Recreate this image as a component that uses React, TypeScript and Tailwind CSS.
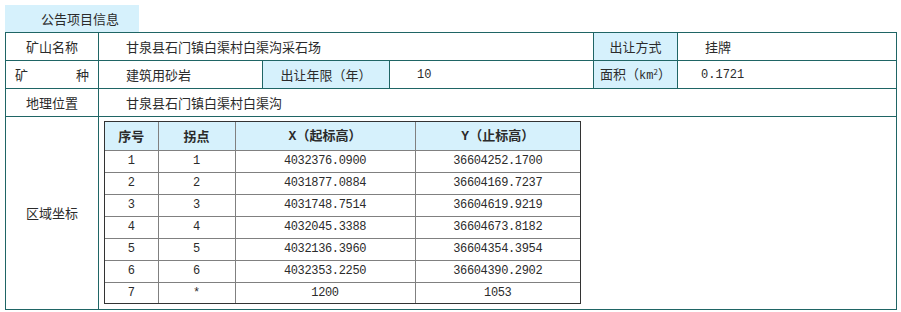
const points = [
  ['1', '1', '4032376.0900', '36604252.1700'],
  ['2', '2', '4031877.0884', '36604169.7237'],
  ['3', '3', '4031748.7514', '36604619.9219'],
  ['4', '4', '4032045.3388', '36604673.8182'],
  ['5', '5', '4032136.3960', '36604354.3954'],
  ['6', '6', '4032353.2250', '36604390.2902'],
  ['7', '*', '1200', '1053'],
];

const cjk = 'font-["Noto_Sans_CJK_SC",sans-serif]';
const mono = 'font-["Liberation_Mono","Noto_Sans_CJK_SC",monospace]';

export default function App() {
  return (
    <div className={`min-h-[312px] bg-white pl-[5px] pt-[5px] text-[13px] text-[#2b2b2b] ${cjk}`}>
      <div className="flex h-[27px] w-[134px] items-center bg-[#d6f1fc] pl-[36px] leading-none">公告项目信息</div>

      <table className="w-[891px] table-fixed border-collapse [&>tbody>tr>td]:border [&>tbody>tr>td]:border-[#1f6565]">
        <colgroup>
          <col className="w-[93px]" />
          <col className="w-[164px]" />
          <col className="w-[127px]" />
          <col className="w-[204px]" />
          <col className="w-[84px]" />
          <col className="w-[219px]" />
        </colgroup>
        <tbody>
          <tr className="h-[28px]">
            <td className="p-0 text-center">矿山名称</td>
            <td colSpan={3} className="p-0 pl-[27px]">甘泉县石门镇白渠村白渠沟采石场</td>
            <td className="bg-[#d6f1fc] p-0 text-center">出让方式</td>
            <td className="p-0 pl-[27px]">挂牌</td>
          </tr>
          <tr className="h-[28px]">
            <td className="p-0">
              <div className="flex justify-between px-[9px]">
                <span>矿</span>
                <span>种</span>
              </div>
            </td>
            <td className="p-0 pl-[27px]">建筑用砂岩</td>
            <td className="bg-[#d6f1fc] p-0 text-center">出让年限（年）</td>
            <td className={`p-0 pl-[27px] text-[12px] ${mono}`}>10</td>
            <td className="bg-[#d6f1fc] p-0 text-center">
              面积（<span className={`text-[12px] ${mono}`}>km</span>
              <sup className="text-[8px]">2</sup>）
            </td>
            <td className={`p-0 pl-[23px] text-[12px] ${mono}`}>0.1721</td>
          </tr>
          <tr className="h-[28px]">
            <td className="p-0 text-center">地理位置</td>
            <td colSpan={5} className="p-0 pl-[27px]">甘泉县石门镇白渠村白渠沟</td>
          </tr>
          <tr>
            <td className="p-0 text-center">区域坐标</td>
            <td colSpan={5} className="p-0 pb-[5px] pl-[5px] pt-[4px] align-top">
              <div className="w-[477px] border border-[#333]">
                <table className="w-[475px] table-fixed border-collapse border-hidden text-center [&_td]:border [&_td]:border-[#808080]">
                  <colgroup>
                    <col className="w-[53px]" />
                    <col className="w-[77px]" />
                    <col className="w-[180px]" />
                    <col className="w-[165px]" />
                  </colgroup>
                  <tbody>
                    <tr className="h-[28px] bg-[#d6f1fc] font-bold">
                      <td className="p-0">序号</td>
                      <td className="p-0">拐点</td>
                      <td className="p-0">
                        <span className={mono}>X</span>（起标高）
                      </td>
                      <td className="p-0">
                        <span className={mono}>Y</span>（止标高）
                      </td>
                    </tr>
                    {points.map((row, i) => (
                      <tr key={row[0]} className={i === points.length - 1 ? 'h-[21px]' : 'h-[22px]'}>
                        {row.map((cell, j) => (
                          <td key={j} className={`p-0 text-[12px] tracking-[-0.35px] ${mono}`}>{cell}</td>
                        ))}
                      </tr>
                    ))}
                  </tbody>
                </table>
              </div>
            </td>
          </tr>
        </tbody>
      </table>
    </div>
  );
}
